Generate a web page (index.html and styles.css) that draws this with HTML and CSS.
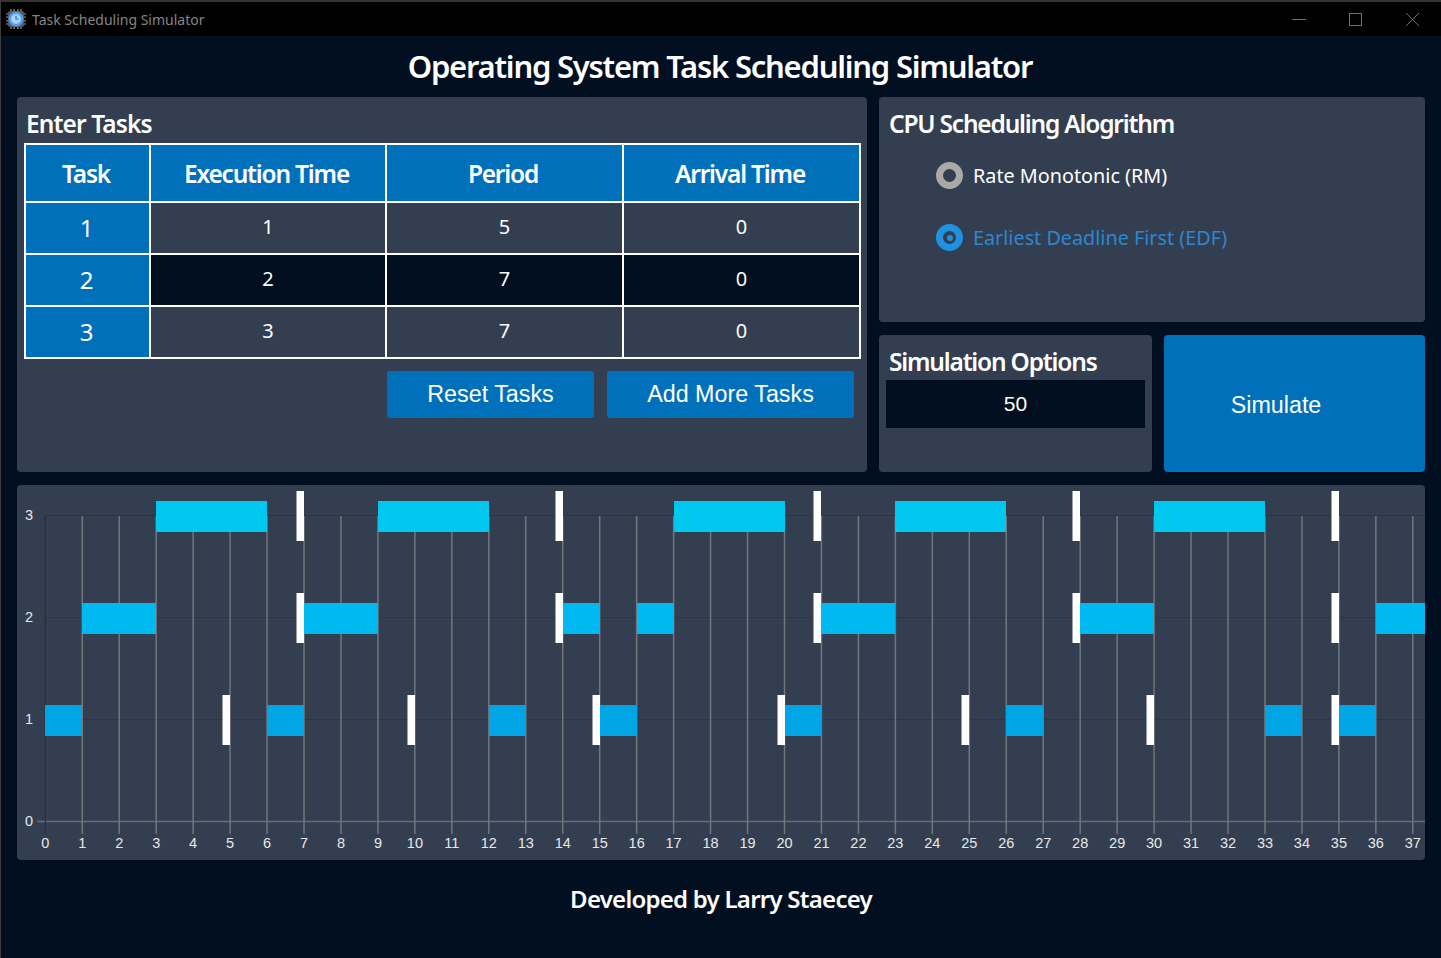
FILE: index.html
```html
<!DOCTYPE html>
<html lang="en">
<head>
  <meta charset="UTF-8">
  <title>Task Scheduling Simulator</title>
  <link rel="stylesheet" href="styles.css">
</head>
<body>

  <div class="titlebar">
    <svg class="app-icon" width="20" height="20" viewBox="0 0 20 20">
      <path d="M5 0v20M8 0v20M12 0v20M15 0v20M0 5h20M0 8h20M0 12h20M0 15h20" stroke="#d09a3c" stroke-width="1.2"/>
      <rect x="2" y="2" width="16" height="16" rx="2" fill="#4a5a78"/>
      <circle cx="10" cy="10" r="7.5" fill="#4a9cf5"/>
      <circle cx="10" cy="10" r="5" fill="#a9d0f8"/>
      <path d="M10 7v3h2.5" stroke="#2b6fc0" stroke-width="1.2" fill="none"/>
    </svg>
    <span class="app-name">Task Scheduling Simulator</span>
    <div class="win-buttons">
      <svg width="14" height="14" viewBox="0 0 14 14"><path d="M0 7.5h14" stroke="#6e6e6e"/></svg>
      <svg width="14" height="14" viewBox="0 0 14 14"><rect x="0.5" y="1.5" width="12" height="12" fill="none" stroke="#6e6e6e"/></svg>
      <svg width="14" height="14" viewBox="0 0 14 14"><path d="M0 1l13 13M13 1L0 14" stroke="#6e6e6e"/></svg>
    </div>
  </div>

  <h1>Operating System Task Scheduling Simulator</h1>

  <div class="top">
    <section class="panel tasks">
      <h2>Enter Tasks</h2>
      <table>
        <tr><th class="col-task">Task</th><th class="col-exec">Execution Time</th><th>Period</th><th>Arrival Time</th></tr>
        <tr><td class="num">1</td><td>1</td><td>5</td><td>0</td></tr>
        <tr class="dark"><td class="num">2</td><td>2</td><td>7</td><td>0</td></tr>
        <tr><td class="num">3</td><td>3</td><td>7</td><td>0</td></tr>
      </table>
      <div class="task-buttons">
        <button class="btn btn-reset">Reset Tasks</button>
        <button class="btn btn-add">Add More Tasks</button>
      </div>
    </section>

    <section class="panel algo">
      <h2>CPU Scheduling Alogrithm</h2>
      <div class="radio">
        <span class="dot"></span>
        <span>Rate Monotonic (RM)</span>
      </div>
      <div class="radio selected">
        <span class="dot"></span>
        <span>Earliest Deadline First (EDF)</span>
      </div>
    </section>

    <section class="panel options">
      <h2>Simulation Options</h2>
      <div class="sim-input">50</div>
    </section>

    <button class="simulate">Simulate</button>
  </div>

  <section class="panel chart" id="chart"></section>

  <footer>Developed by Larry Staecey</footer>

  <script src="chart.js"></script>
</body>
</html>
```

FILE: styles.css
```css
html, body {
  margin: 0;
  height: 958px;
  overflow: hidden;
}
body {
  font-family: "Noto Sans", sans-serif;
  background-color: #010f20;
  color: white;
  border-left: 1px solid #3c3c3c;
  border-top: 2px solid #333;
  box-sizing: border-box;
}
.titlebar {
  display: flex;
  align-items: center;
  height: 34px;
  background-color: black;
  margin-left: -1px;
  padding-left: 6px;
}
.app-name {
  margin-left: 6px;
  font-size: 14px;
  color: #858585;
}
.win-buttons {
  margin-left: auto;
  margin-right: 21px;
  display: flex;
  gap: 43px;
}
h1 {
  margin: 0;
  padding-right: 2px;
  height: 61px;
  line-height: 60px;
  text-align: center;
  font-size: 31px;
  font-weight: 600;
  letter-spacing: -1.23px;
}
h2 {
  margin: 0;
  font-size: 24.5px;
  line-height: 30px;
  font-weight: 600;
  letter-spacing: -1.2px;
}
.panel {
  background-color: #333e50;
  border-radius: 4px;
}
.top {
  display: grid;
  grid-template-columns: 850px 273px 261px;
  grid-template-rows: 225px 137px;
  column-gap: 12px;
  row-gap: 13px;
  margin-left: 16px;
  width: 1408px;
}
.tasks {
  grid-row: 1 / 3;
  padding: 12px 6px 0 7px;
}
.tasks h2 {
  padding-left: 2px;
  letter-spacing: -0.9px;
}
table {
  margin-top: 4px;
  width: 837px;
  table-layout: fixed;
  border-collapse: collapse;
  border: 2px solid white;
}
th, td {
  border: 2px solid white;
  padding: 0;
  text-align: center;
}
th {
  height: 56px;
  padding-right: 3px;
  background-color: #0070bb;
  font-size: 24.5px;
  font-weight: 600;
  letter-spacing: -1.2px;
}
td {
  height: 46px;
  padding-bottom: 4px;
  font-size: 20px;
}
.col-task {
  width: 120px;
}
.col-exec {
  width: 231px;
}
td.num {
  height: 49px;
  padding: 0 2px 1px 0;
  background-color: #0070bb;
  font-size: 24px;
}
tr.dark td:not(.num) {
  background-color: #010f20;
}
.task-buttons {
  display: flex;
  gap: 13px;
  margin: 12px 0 0 363px;
}
.btn {
  height: 47px;
  border: none;
  border-radius: 3px;
  background-color: #0070bb;
  color: white;
  font-family: "Liberation Sans", sans-serif;
  font-size: 23.3px;
}
.btn-reset {
  width: 207px;
}
.btn-add {
  width: 247px;
}
.algo {
  grid-column: 2 / 4;
  padding: 12px 10px 0;
}
.radio {
  display: flex;
  align-items: center;
  gap: 10px;
  height: 28px;
  margin: 22px 0 0 47px;
  font-size: 19.8px;
}
.radio + .radio {
  margin-top: 34px;
}
.dot {
  width: 13px;
  height: 13px;
  border: 7px solid #a9a9a9;
  border-radius: 50%;
}
.selected {
  color: #2f86d0;
}
.selected .dot {
  width: 6px;
  height: 6px;
  padding: 3.5px;
  border-color: #2090e0;
  background-color: #2090e0;
  background-clip: content-box;
}
.options {
  padding: 12px 7px 0;
}
.options h2 {
  padding-left: 3px;
}
.sim-input {
  height: 48px;
  line-height: 48px;
  margin-top: 3px;
  background-color: #010f20;
  text-align: center;
  font-family: "Liberation Sans", sans-serif;
  font-size: 21px;
}
.simulate {
  border: none;
  border-radius: 4px;
  background-color: #0070bb;
  color: white;
  font-family: "Liberation Sans", sans-serif;
  font-size: 23.3px;
  padding: 4px 37px 0 0;
}
.chart {
  height: 375px;
  width: 1408px;
  margin: 13px 0 0 16px;
  overflow: hidden;
}
.chart svg {
  display: block;
}
.chart text {
  font-family: "Liberation Sans", sans-serif;
  font-size: 14.5px;
  fill: #e8e8e8;
  text-anchor: middle;
}
.grid-v {
  stroke: #72767d;
  stroke-width: 1.5;
}
.grid-zero {
  stroke: #222c3b;
}
.grid-h {
  stroke: #2b3543;
}
.axis {
  stroke: #666c76;
  stroke-width: 1.5;
}
.t1 { fill: #00a5e6; }
.t2 { fill: #00b9f1; }
.t3 { fill: #00c8ee; }
.deadline { fill: white; }
footer {
  margin-top: 22px;
  text-align: center;
  font-size: 24px;
  line-height: 34px;
  font-weight: 600;
  letter-spacing: -0.75px;
}
```

FILE: chart.js
```js
// bars are [start, end] in time units, deadlines are time units
const tasks = [
  { id: 1, cls: 't1', bars: [[0,1],[6,7],[12,13],[15,16],[20,21],[26,27],[33,34],[35,36]], deadlines: [5,10,15,20,25,30,35] },
  { id: 2, cls: 't2', bars: [[1,3],[7,9],[14,15],[16,17],[21,23],[28,30],[36,38]], deadlines: [7,14,21,28,35] },
  { id: 3, cls: 't3', bars: [[3,6],[9,12],[17,20],[23,26],[30,33]], deadlines: [7,14,21,28,35] }
];

const stepX = 36.96;
const stepY = 102;
const left = 28.3;   // panel starts at x=17
const bottom = 336.5; // panel starts at y=485
const x = t => left + t * stepX;
const y = v => bottom - v * stepY;

let svg = '<svg width="1408" height="375" viewBox="0 0 1408 375">';

for (let v = 0; v <= 3; v++) {
  const cls = v === 0 ? 'axis' : 'grid-h';
  svg += `<line class="${cls}" x1="${v === 0 ? 20 : 28}" x2="1408" y1="${y(v)}" y2="${y(v)}"/>`;
  svg += `<text x="12" y="${y(v) + 4}">${v}</text>`;
}

for (let t = 0; t <= 37; t++) {
  svg += `<line class="${t === 0 ? 'grid-zero' : 'grid-v'}" x1="${x(t)}" x2="${x(t)}" y1="31" y2="349"/>`;
  svg += `<text x="${x(t)}" y="363">${t}</text>`;
}

tasks.forEach(task => {
  const cy = y(task.id);
  task.bars.forEach(b => {
    const x1 = Math.round(x(b[0]));
    const x2 = Math.round(x(b[1]));
    svg += `<rect class="${task.cls}" x="${x1}" y="${cy - 14.5}" width="${x2 - x1}" height="31"/>`;
  });
  task.deadlines.forEach(d => {
    svg += `<rect class="deadline" x="${Math.round(x(d)) - 7.5}" y="${cy - 24.5}" width="7.5" height="50"/>`;
  });
});

svg += '</svg>';
document.getElementById('chart').innerHTML = svg;
```
